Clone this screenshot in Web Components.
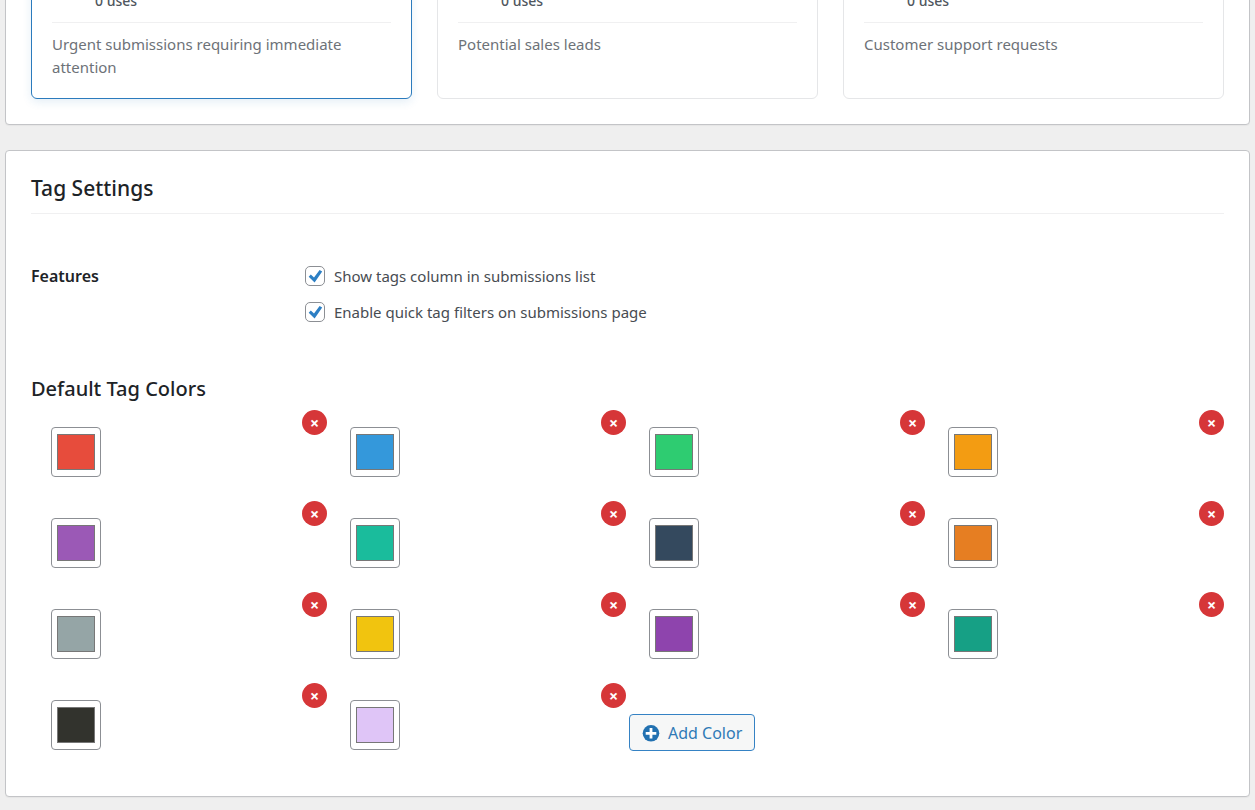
<!DOCTYPE html>
<html lang="en">
<head>
<meta charset="utf-8">
<meta name="viewport" content="width=device-width, initial-scale=1">
<title>Tag Settings</title>
<style>
  html, body { margin: 0; }
  html { overflow: hidden; background: #efefef; }
  body { font: 15px/23px "Noto Sans", "Open Sans", sans-serif; color: #474c52; }
</style>
</head>
<body>
<tag-manager></tag-manager>

<template id="tpl-manager">
  <style>
    :host { display: flex; flex-direction: column; gap: 25px; padding: 0 5px 12px; margin-top: -58px; }
    .cards { display: grid; grid-template-columns: repeat(3, minmax(0, 1fr)); gap: 25px; }
  </style>
  <settings-panel>
    <div class="cards">
      <tag-card active uses="0 uses">Urgent submissions requiring immediate attention</tag-card>
      <tag-card uses="0 uses">Potential sales leads</tag-card>
      <tag-card uses="0 uses">Customer support requests</tag-card>
    </div>
  </settings-panel>
  <settings-panel heading="Tag Settings">
    <feature-group label="Features">
      <check-option>Show tags column in submissions list</check-option>
      <check-option>Enable quick tag filters on submissions page</check-option>
    </feature-group>
    <color-palette heading="Default Tag Colors"
      colors="#e74c3c #3498db #2ecc71 #f39c12 #9b59b6 #1abc9c #34495e #e67e22 #95a5a6 #f1c40f #8e44ad #16a085 #32332d #dfc5f7"></color-palette>
  </settings-panel>
</template>

<template id="tpl-panel">
  <style>
    :host { display: block; box-sizing: border-box; padding: 25px; background: #fff; border: 1px solid #c3c4c7; border-radius: 4px; box-shadow: 0 1px 1px rgba(0,0,0,.04); }
    h2 { margin: 0; padding-bottom: 13px; border-bottom: 1px solid #f0f0f1; font-size: 21px; line-height: 24px; font-weight: 500; color: #1d2327; }
  </style>
  <slot></slot>
</template>

<template id="tpl-card">
  <style>
    :host { display: flex; flex-direction: column; box-sizing: border-box; padding: 20px 20px 19px; background: #fff; border: 1px solid #e5e6e8; border-radius: 6px; }
    :host([active]) { border-color: #2b7bbd; box-shadow: 0 3px 10px rgba(34,113,177,.12); }
    .uses { padding: 0 0 10px 43px; border-bottom: 1px solid #f0f0f1; font-size: 14px; font-weight: 500; line-height: 23px; color: #50575e; }
    p { margin: 0; padding-top: 10px; color: #6d7278; }
  </style>
  <div class="uses"></div>
  <p><slot></slot></p>
</template>

<template id="tpl-group">
  <style>
    :host { display: block; padding-top: 50px; }
    fieldset { display: grid; grid-template-columns: 274px 1fr; margin: 0; padding: 0; border: 0; min-width: 0; }
    .label { font-size: 16px; font-weight: 600; color: #1d2327; line-height: 24px; }
    .options { display: flex; flex-direction: column; align-items: flex-start; gap: 12px; }
  </style>
  <fieldset aria-labelledby="label">
    <div class="label" id="label"></div>
    <div class="options"><slot></slot></div>
  </fieldset>
</template>

<template id="tpl-check">
  <style>
    :host { display: block; }
    label { display: flex; align-items: center; gap: 9px; line-height: 24px; }
    .box { display: grid; width: 20px; height: 20px; }
    .box > * { grid-area: 1 / 1; }
    input { appearance: none; box-sizing: border-box; width: 20px; height: 20px; margin: 0; border: 1px solid #8c8f94; border-radius: 5px; background: #fff; }
    svg { width: 20px; height: 20px; fill: #2c7fc4; pointer-events: none; visibility: hidden; z-index: 1; }
    input:checked + svg { visibility: visible; }
  </style>
  <label>
    <span class="box">
      <input type="checkbox" checked>
      <svg viewBox="0 0 20 20" aria-hidden="true"><path d="M14.6 4 17.2 5.5 9.6 16.5 3.7 10.8 5.8 8.6 9 11.6Z"/></svg>
    </span>
    <span><slot></slot></span>
  </label>
</template>

<template id="tpl-palette">
  <style>
    :host { display: block; padding-top: 53px; }
    h3 { margin: 0; font-size: 20px; line-height: 24px; font-weight: 500; color: #1d2327; }
    .grid { display: grid; grid-template-columns: repeat(4, minmax(0, 1fr)); gap: 3px; padding-top: 9px; }
    .add { justify-self: start; align-self: end; margin-bottom: 20px; display: flex; align-items: center; gap: 8px; box-sizing: border-box; height: 37px; padding: 2px 12px 0; border: 1px solid #3582c4; border-radius: 4px; background: #f6f7f7; color: #2f7ab6; font: inherit; font-size: 16px; }
    svg { width: 18px; height: 18px; }
  </style>
  <h3></h3>
  <div class="grid">
    <button class="add" type="button">
      <svg viewBox="0 0 18 18" aria-hidden="true"><circle cx="9" cy="8.3" r="8.3" fill="#2271b1"/><path d="M9 3v10.6M3.7 8.3h10.6" stroke="#fff" stroke-width="2.8"/></svg>
      <span>Add Color</span>
    </button>
  </div>
</template>

<template id="tpl-swatch">
  <style>
    :host { display: flex; justify-content: space-between; align-items: flex-start; box-sizing: border-box; height: 88px; padding-left: 20px; }
    .color { box-sizing: border-box; width: 50px; height: 50px; margin: 17px 0 0; padding: 6px 5px; border: 1px solid #8c8f94; border-radius: 4px; background: #fff; }
    .color::-webkit-color-swatch-wrapper { padding: 0; }
    .color::-webkit-color-swatch { border: 1px solid #777; }
    button { display: flex; align-items: center; justify-content: center; width: 25px; height: 25px; padding: 0; border: 0; border-radius: 50%; background: #d63638; color: #fff; font: 700 16px/20px "Noto Sans", sans-serif; }
  </style>
  <input class="color" type="color" aria-label="Tag color">
  <button type="button" aria-label="Remove color">×</button>
</template>

<script>
  class Base extends HTMLElement {
    constructor(id) {
      super();
      this.attachShadow({ mode: "open" }).append(document.getElementById(id).content.cloneNode(true));
    }
    $(selector) { return this.shadowRoot.querySelector(selector); }
  }

  customElements.define("settings-panel", class extends Base {
    constructor() { super("tpl-panel"); }
    connectedCallback() {
      const text = this.getAttribute("heading");
      if (!text || this.$("h2")) return;
      const h = document.createElement("h2");
      h.textContent = text;
      this.$("slot").before(h);
    }
  });

  customElements.define("tag-card", class extends Base {
    constructor() { super("tpl-card"); }
    connectedCallback() { this.$(".uses").textContent = this.getAttribute("uses"); }
  });

  customElements.define("feature-group", class extends Base {
    constructor() { super("tpl-group"); }
    connectedCallback() { this.$(".label").textContent = this.getAttribute("label"); }
  });

  customElements.define("check-option", class extends Base {
    constructor() { super("tpl-check"); }
  });

  customElements.define("color-swatch", class extends Base {
    constructor() { super("tpl-swatch"); }
    connectedCallback() {
      this.$("input").value = this.getAttribute("value");
      this.$("button").onclick = () => this.remove();
    }
  });

  customElements.define("color-palette", class extends Base {
    constructor() { super("tpl-palette"); }
    connectedCallback() {
      this.$("h3").textContent = this.getAttribute("heading");
      this.getAttribute("colors").split(" ").forEach(c => this.add(c));
      this.$(".add").onclick = () => this.add("#3498db");
    }
    add(color) {
      const item = document.createElement("color-swatch");
      item.setAttribute("value", color);
      this.$(".add").before(item);
    }
  });

  customElements.define("tag-manager", class extends Base {
    constructor() { super("tpl-manager"); }
  });
</script>
</body>
</html>
